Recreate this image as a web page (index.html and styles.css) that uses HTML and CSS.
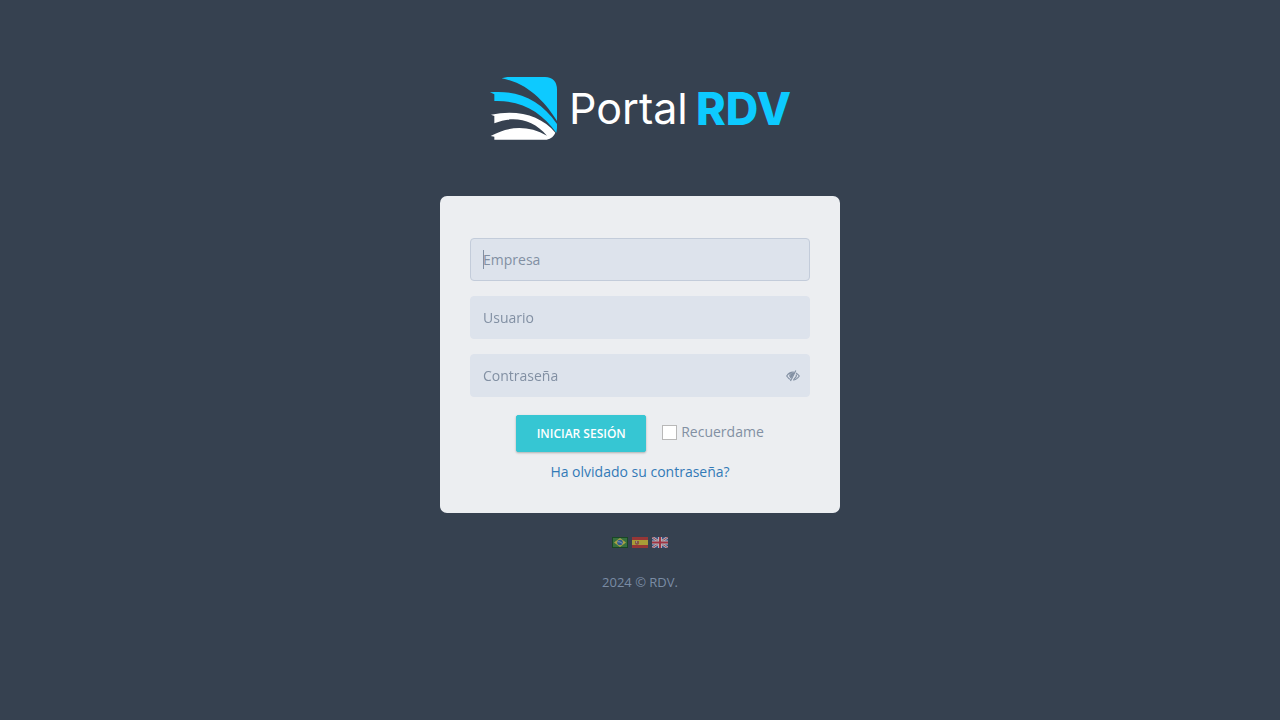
FILE: index.html
```html
<!DOCTYPE html>
<html lang="es">
<head>
<meta charset="utf-8">
<meta name="viewport" content="width=device-width, initial-scale=1">
<title>Portal RDV</title>
<link rel="stylesheet" href="styles.css">
</head>
<body>
<header class="logo">
  <svg class="logo-art" viewBox="0 0 300 66" role="img" aria-label="Portal RDV">
    <g transform="translate(-10 -10) scale(.33333)">
      <path class="cyan" d="M65 40L82 36H195Q231 38 231 74V168C199 117 148 55 65 40Z"/>
      <path class="cyan" d="M30 82C109 74 181 103 231 177V190L229 203C185 143 128 105 43 108V88Z"/>
      <path class="white" d="M33 149C112 132 184 151 226 203Q220 219 200 224H43V215L32 213C86 183 144 180 201 212C158 162 99 151 43 175V153Z"/>
    </g>
    <text class="word white" x="79" y="49">Portal</text>
    <text class="word word-strong cyan" x="206" y="50">RDV</text>
  </svg>
</header>
<main class="card">
  <form class="login">
    <div class="field"><input class="control" type="text" placeholder="Empresa" aria-label="Empresa" autofocus><span class="caret" aria-hidden="true"></span></div>
    <div class="field"><input class="control" type="text" placeholder="Usuario" aria-label="Usuario"></div>
    <div class="field">
      <input class="control" type="password" placeholder="Contraseña" aria-label="Contraseña">
      <button class="reveal" type="button" aria-label="Mostrar contraseña">
        <svg viewBox="0 0 14 12" width="14" height="12">
          <path d="M4.500 9.400Q2.400 8.600.7 6Q3.200 2.100 7 2.100L8.200 2.200M10 2.900Q12 4 13.300 6Q10.800 9.900 7 9.900M4.400 3Q3 5.500 4.900 8M10.400 4.500Q10.700 7.500 7.900 8.700" fill="none" stroke="currentColor" stroke-width="1.100"/>
          <path d="M5 3.300L8.600 2.700L5.500 8Q3.300 6.500 5 3.300Z" fill="currentColor"/>
          <path d="M9.800.6L4.500 10.900" stroke="currentColor" stroke-width="1.200"/>
        </svg>
      </button>
    </div>
    <div class="actions">
      <button class="submit" type="submit">Iniciar sesión</button>
      <label class="remember"><input class="tick" type="checkbox">Recuerdame</label>
    </div>
    <a class="forgot" href="#">Ha olvidado su contraseña?</a>
  </form>
</main>
<nav class="languages" aria-label="Idioma">
  <a class="flag" href="#" aria-label="Português"><svg viewBox="0 0 16 11"><path fill="#064b0a" d="M0 0h16v11H0z"/><path fill="#398f35" d="M1 1h14v9H1z"/><path fill="#f4e33b" d="M8 1l6 4.500L8 10 2 5.500z"/><circle cx="8" cy="5.500" r="2.800" fill="#2868b8"/><path d="M5.500 4.700Q8 4.200 10.500 6.500" fill="none" stroke="#dce8f5" stroke-width=".8"/></svg></a>
  <a class="flag" href="#" aria-label="Español"><svg viewBox="0 0 16 11"><path fill="#d52f26" d="M0 0h16v11H0z"/><path fill="#f5d928" d="M0 3h16v5H0z"/><path fill="#bd6540" d="M3 4h4v3L5 8 3 7z"/><path fill="#d9c6a1" d="M4 4h1v2H4z"/></svg></a>
  <a class="flag" href="#" aria-label="English"><svg viewBox="0 0 16 11"><path fill="#3f58a4" d="M0 0h16v11H0z"/><path d="M0 0l16 11M16 0L0 11" stroke="#fff" stroke-width="2.600"/><path d="M0 0l16 11M16 0L0 11" stroke="#df4655" stroke-width="1"/><path fill="#fff" d="M6 0h4v11H6zM0 3.500h16v4H0z"/><path fill="#e32b3a" d="M7 0h2v11H7zM0 4.500h16v2H0z"/></svg></a>
</nav>
<footer class="copyright">2024 © RDV.</footer>
</body>
</html>
```
FILE: styles.css
```css
* { box-sizing: border-box; }
body {
  margin: 0;
  min-height: 100vh;
  background: #364150;
  font: 14px/20px "Open Sans", sans-serif;
  color: #8290a3;
}
.logo { padding-top: 75px; text-align: center; }
.logo-art { display: block; width: 300px; margin: 0 auto; overflow: visible; }
.word { font-family: Inter, sans-serif; font-size: 43px; font-weight: 400; }
.word-strong { font-size: 45px; font-weight: 800; }
.cyan { fill: #0dcaff; }
.white { fill: #fff; }
.card {
  width: 100%;
  max-width: 400px;
  margin: 55px auto 0;
  padding: 42px 30px 31px;
  background: #eceef1;
  border-radius: 7px;
}
.login { display: flex; flex-direction: column; }
.field { position: relative; margin-bottom: 15px; }
.control {
  display: block;
  width: 100%;
  height: 43px;
  padding: 6px 12px;
  border: 1px solid #dde3ec;
  border-radius: 4px;
  outline: 0;
  background: #dde3ec;
  color: #8290a3;
  font: inherit;
}
.control::placeholder { color: #8290a3; opacity: 1; }
.control:focus { border-color: #c3ccda; }
.caret { display: none; position: absolute; top: 12px; left: 13px; width: 1px; height: 19px; background: #8290a3; }
.control:focus:placeholder-shown + .caret { display: block; }
.reveal {
  position: absolute;
  top: 16px;
  right: 10px;
  display: flex;
  padding: 0;
  border: 0;
  background: none;
  color: #8290a3;
}
.actions { display: flex; justify-content: center; gap: 16px; margin-top: 3px; }
.submit {
  width: 130px;
  height: 37px;
  padding: 0;
  border: 1px solid #36c6d3;
  border-radius: 2px;
  background: #36c6d3;
  box-shadow: 0 1px 3px rgba(0, 0, 0, .1), 0 1px 2px rgba(0, 0, 0, .18);
  color: #fff;
  font: 600 12px/18px "Open Sans", sans-serif;
  text-transform: uppercase;
}
.remember { display: flex; align-items: center; gap: 4px; height: 34px; }
.tick {
  appearance: none;
  width: 15px;
  height: 15px;
  margin: 0;
  border: 1px solid #b8b8b8;
  background: #fff;
}
.forgot { align-self: center; margin-top: 10px; color: #337ab7; text-decoration: none; }
.languages { display: flex; justify-content: center; gap: 4px; margin-top: 24px; }
.flag { display: flex; width: 16px; height: 11px; opacity: .6; }
.flag svg { width: 16px; height: 11px; }
.copyright { padding: 24px 0 10px; text-align: center; font-size: 13px; color: #7a8ca5; }
```
